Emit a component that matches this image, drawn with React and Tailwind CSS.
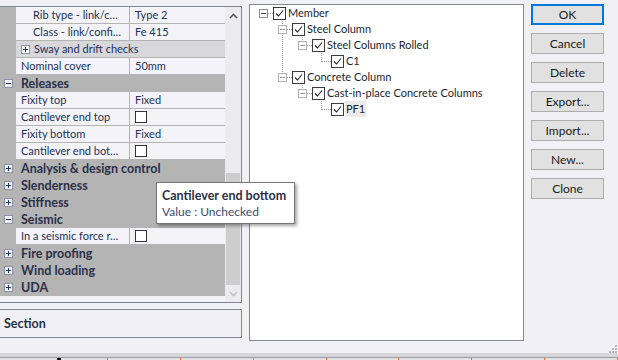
import React from "react";

const rows = [
  { t: "prop", name: "Rib type - link/c…", value: "Type 2", indent: true },
  { t: "prop", name: "Class - link/confi…", value: "Fe 415", indent: true },
  { t: "sub", name: "Sway and drift checks" },
  { t: "prop", name: "Nominal cover", value: "50mm" },
  { t: "cat", name: "Releases", open: true },
  { t: "prop", name: "Fixity top", value: "Fixed" },
  { t: "prop", name: "Cantilever end top", check: true },
  { t: "prop", name: "Fixity bottom", value: "Fixed" },
  { t: "prop", name: "Cantilever end bot…", check: true },
  { t: "cat", name: "Analysis & design control" },
  { t: "cat", name: "Slenderness" },
  { t: "cat", name: "Stiffness" },
  { t: "cat", name: "Seismic", open: true },
  { t: "prop", name: "In a seismic force r…", check: true },
  { t: "cat", name: "Fire proofing" },
  { t: "cat", name: "Wind loading" },
  { t: "cat", name: "UDA" },
];

function PMBox({ open, light }) {
  return (
    <div
      className={
        "w-[9px] h-[9px] flex items-center justify-center border shrink-0 " +
        (light ? "bg-white border-[#8d92a0]" : "bg-[#eef0f5] border-[#8d92a0]")
      }
    >
      <svg width="7" height="7" viewBox="0 0 7 7" shapeRendering="crispEdges">
        <rect x="1" y="3" width="5" height="1" fill="#2a3560" />
        {!open && <rect x="3" y="1" width="1" height="5" fill="#2a3560" />}
      </svg>
    </div>
  );
}

function GridRow({ r }) {
  if (r.t === "cat") {
    return (
      <div className="h-[17px] flex items-center bg-[#b4b4b4]">
        <div className="w-[16px] flex justify-center">
          <PMBox open={r.open} />
        </div>
        <span className="pl-[5px] font-bold text-[12.5px] text-[#2b3048] whitespace-nowrap">{r.name}</span>
      </div>
    );
  }
  if (r.t === "sub") {
    return (
      <div className="h-[17px] flex">
        <div className="w-[16px] bg-[#b4b4b4]" />
        <div className="flex-1 flex items-center bg-[#d8d8da] border-b border-[#b4b4b4] pl-[5px]">
          <PMBox light />
          <span className="pl-[4px] text-[#22305a] whitespace-nowrap">{r.name}</span>
        </div>
      </div>
    );
  }
  return (
    <div className="h-[17px] flex">
      <div className="w-[16px] bg-[#b4b4b4]" />
      <div
        className={
          "w-[114px] flex items-center border-b border-r border-[#b4b4b4] whitespace-nowrap overflow-hidden text-[#22305a] " +
          (r.indent ? "pl-[17px]" : "pl-[5px]")
        }
      >
        {r.name}
      </div>
      <div className="flex-1 flex items-center border-b border-[#b4b4b4] pl-[5px] text-[#22305a]">
        {r.check ? <div className="w-[12px] h-[12px] border border-[#333] bg-white" /> : r.value}
      </div>
    </div>
  );
}

const nodes = [
  { label: "Member", level: 0, exp: true, next: null },
  { label: "Steel Column", level: 1, exp: true, next: 4 },
  { label: "Steel Columns Rolled", level: 2, exp: true, next: null },
  { label: "C1", level: 3, exp: false, next: null },
  { label: "Concrete Column", level: 1, exp: true, next: null },
  { label: "Cast-in-place Concrete Columns", level: 2, exp: true, next: null },
  { label: "PF1", level: 3, exp: false, next: null, sel: true },
];
const expLeft = [9, 28, 48, 67];
const padCls = ["pl-[9px]", "pl-[28px]", "pl-[48px]", "pl-[67px]"];

function TreeLines() {
  const lines = [];
  nodes.forEach((n, i) => {
    const cx = expLeft[n.level] + 4.5;
    const cy = 16 * i + 8.5;
    const cbx = expLeft[n.level] + 14;
    lines.push(<line key={"h" + i} x1={cx} y1={cy} x2={cbx} y2={cy} />);
    if (n.level > 0) {
      const endY = n.next != null ? 16 * n.next + 8.5 : cy;
      lines.push(<line key={"v" + i} x1={cx} y1={16 * i} x2={cx} y2={endY} />);
    }
  });
  return (
    <svg className="absolute left-0 top-0" width="273" height="140" stroke="#9a9a9a" strokeWidth="1" strokeDasharray="1 1" shapeRendering="crispEdges">
      {lines}
    </svg>
  );
}

function CheckBox() {
  return (
    <div className="w-[13px] h-[13px] border border-[#3c3c3c] bg-white flex items-center justify-center shrink-0">
      <svg width="11" height="11" viewBox="0 0 11 11">
        <polyline points="2,5.5 4.5,8 9,2.5" fill="none" stroke="#222" strokeWidth="1.1" />
      </svg>
    </div>
  );
}

function TreeRow({ n }) {
  return (
    <div className={"h-[16px] flex items-center " + padCls[n.level]}>
      {n.exp ? (
        <div
          className={
            "w-[9px] h-[9px] border bg-white flex items-center justify-center shrink-0 " +
            (n.level === 0 ? "border-[#8a8a8a]" : "border-[#b2b2b2]")
          }
        >
          <svg width="7" height="7" viewBox="0 0 7 7" shapeRendering="crispEdges">
            <rect x="1" y="3" width="5" height="1" fill={n.level === 0 ? "#404040" : "#9a9a9a"} />
          </svg>
        </div>
      ) : (
        <div className="w-[9px] shrink-0" />
      )}
      <div className="w-[5px] shrink-0" />
      <CheckBox />
      <span
        className={
          "ml-[1px] px-[1px] h-[16px] leading-[16px] text-[#1b1f33] whitespace-nowrap " + (n.sel ? "bg-[#ebebeb]" : "")
        }
      >
        {n.label}
      </span>
    </div>
  );
}

const buttons = ["OK", "Cancel", "Delete", "Export...", "Import...", "New...", "Clone"];

export default function App() {
  const ticks = [107, 180, 253, 326, 399, 472, 545, 617];
  return (
    <div className="w-[618px] h-[360px] bg-[#f0f0f5] relative overflow-hidden font-['Segoe_UI',Lato,sans-serif] text-[11px] leading-[16px] flex flex-col">
      <div className="h-[353px] flex items-start">
        {/* Left column */}
        <div className="w-[242px] flex flex-col pt-[6px]">
          <div className="h-[297px] flex border-t border-r border-b border-[#828790] bg-[#f4f4f8]">
            <div className="w-[225px] flex flex-col">
              {rows.map((r, i) => (
                <GridRow key={i} r={r} />
              ))}
            </div>
            <div className="w-[16px] flex flex-col bg-[#ececee]">
              <div className="h-[17px] flex items-center justify-center">
                <svg width="9" height="6" viewBox="0 0 9 6">
                  <polyline points="1,5 4.5,1.5 8,5" fill="none" stroke="#5a5a5a" strokeWidth="1.6" />
                </svg>
              </div>
              <div className="flex-1 flex flex-col">
                <div className="mt-[149px] mx-[1px] h-[112px] bg-[#cdcdcd]" />
              </div>
              <div className="h-[17px] flex items-center justify-center">
                <svg width="9" height="6" viewBox="0 0 9 6">
                  <polyline points="1,1 4.5,4.5 8,1" fill="none" stroke="#c2c2c2" strokeWidth="1.6" />
                </svg>
              </div>
            </div>
          </div>
          <div className="mt-[6px] h-[29px] border-t border-r border-b border-[#828790] flex items-center pl-[4px] font-bold text-[12.5px] text-[#2b3048]">
            Section
          </div>
        </div>

        {/* Tree */}
        <div className="ml-[7px] mt-[4px] w-[275px] h-[337px] border border-[#828790] bg-white">
          <div className="relative">
            <TreeLines />
            <div className="relative flex flex-col">
              {nodes.map((n, i) => (
                <TreeRow key={i} n={n} />
              ))}
            </div>
          </div>
        </div>

        {/* Buttons */}
        <div className="ml-[7px] mt-[4px] w-[73px] flex flex-col gap-[8px] text-[12px]">
          {buttons.map((b) => (
            <div
              key={b}
              className={
                "h-[21px] flex items-center justify-center bg-[#e1e1e1] text-[#1a1a1a] " +
                (b === "OK" ? "border-2 border-[#0078d7]" : "border border-[#adadad]")
              }
            >
              {b}
            </div>
          ))}
        </div>
      </div>

      {/* bottom strip */}
      <div className="h-[4px] bg-[#d6d6da]" />
      <div className="h-[1px] bg-[#9a9aa2]" />
      <div className="h-[2px] bg-[#e2e2e4] flex">
        <div className="w-[57px]" />
        <div className="w-[4px] bg-[#111]" />
        {ticks.map((t, i) => (
          <React.Fragment key={t}>
            <div className={i === 0 ? "w-[46px]" : "w-[72px]"} />
            <div className="w-[1px] bg-[#f26b2a]" />
          </React.Fragment>
        ))}
      </div>

      {/* resize grip */}
      <svg className="absolute left-[608px] top-[344px]" width="10" height="10" viewBox="0 0 10 10" fill="#b8b8bc" shapeRendering="crispEdges">
        <rect x="7" y="1" width="2" height="2" />
        <rect x="7" y="4" width="2" height="2" />
        <rect x="4" y="4" width="2" height="2" />
        <rect x="7" y="7" width="2" height="2" />
        <rect x="4" y="7" width="2" height="2" />
        <rect x="1" y="7" width="2" height="2" />
      </svg>

      {/* tooltip */}
      <div className="absolute left-[156px] top-[182px] w-[139px] h-[42px] border border-[#767676] bg-white shadow-[2px_2px_3px_rgba(0,0,0,0.35)] pl-[5px] pt-[5px] leading-[16px] text-[12px]">
        <div className="font-bold text-[12.5px] text-[#2b3048] whitespace-nowrap">Cantilever end bottom</div>
        <div className="text-[#3a4a74] whitespace-nowrap">Value : Unchecked</div>
      </div>
    </div>
  );
}
